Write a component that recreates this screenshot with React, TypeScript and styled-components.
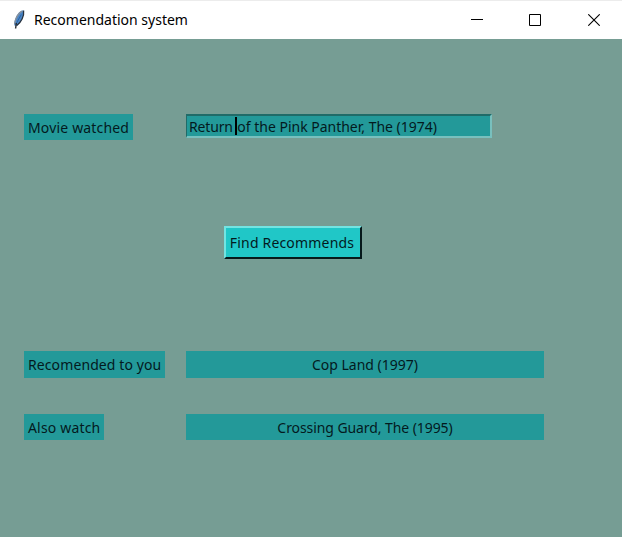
import React from 'react';
import styled, { createGlobalStyle } from 'styled-components';

const GlobalStyle = createGlobalStyle`
  * { box-sizing: border-box; }
  body { margin: 0; overflow: hidden; }
`;

const Window = styled.div`
  width: 622px;
  height: 537px;
  display: flex;
  flex-direction: column;
  background: #769d94;
  color: #031a1e;
  font: 14px/20px 'Noto Sans', 'Open Sans', sans-serif;
  white-space: nowrap;
`;

const TitleBar = styled.header`
  height: 39px;
  flex: none;
  display: flex;
  align-items: center;
  background: #fff;
  border-top: 1px solid #ececec;
  color: #000;
`;

const Feather = styled.svg`
  width: 16px;
  height: 22px;
  margin-left: 11px;
  margin-right: 7px;
`;

const Title = styled.h1`
  flex: 1;
  margin: 0;
  font-size: 14px;
  font-weight: 400;
  line-height: 20px;
`;

const Controls = styled.div`
  display: flex;
  height: 38px;
`;

const ControlButton = styled.button`
  width: 58px;
  height: 38px;
  padding: 0;
  border: 0;
  background: none;
  display: flex;
  align-items: center;
  justify-content: center;

  &:last-child {
    padding-left: 2px;
  }
`;

const Form = styled.main`
  display: grid;
  grid-template-columns: 162px 358px;
  grid-template-rows: 112px 125px 63px 27px;
  padding: 75px 0 0 24px;
  align-items: start;
  justify-items: start;
`;

const Text = styled.span<{ $spacing?: number }>`
  letter-spacing: ${(p) => p.$spacing ?? 0}px;
`;

const Label = styled.label<{ $width: number; $height?: number }>`
  width: ${(p) => p.$width}px;
  height: ${(p) => p.$height ?? 26}px;
  padding: 4px 4px 0;
  background: #239999;
`;

const Entry = styled.div`
  display: flex;
  width: 306px;
  height: 24px;
  padding: 0 1px 0 2px;
  line-height: 21px;
  background: #239999;
  border: 2px solid;
  border-width: 2px 2px 2px 1px;
  border-color: #206b68 #78c0be #78c0be #206b68;
`;

const Caret = styled.i`
  width: 2px;
  height: 18px;
  margin: 1px 0 0 -1px;
  background: #000;
`;

const FindButton = styled.button`
  grid-column: 1 / 3;
  width: 138px;
  height: 33px;
  margin-left: 200px;
  padding: 0 2px 0 0;
  color: inherit;
  font: inherit;
  background: #20c7c7;
  border: 2px solid;
  border-color: #73e4e2 #06191b #06191b #73e4e2;
`;

const Result = styled.output<{ $height?: number }>`
  width: 358px;
  height: ${(p) => p.$height ?? 26}px;
  padding-top: 4px;
  text-align: center;
  background: #239999;
`;

export default function App() {
  return (
    <Window>
      <GlobalStyle />
      <TitleBar>
        <Feather viewBox="0 0 16 22">
          <path d="M12.6 1.3C9.5 1.3 6.5 4.5 4.8 8.5C3.3 12 3 14.5 3.4 16.5L5.8 16.8C9.5 14 13.6 7 12.6 1.3Z" fill="#4a86c8" />
          <path d="M11.5 2C8 3.5 4.2 8.5 3.6 15" fill="none" stroke="#8d9298" strokeWidth="1.3" />
          <path d="M12.6 1.6C13.4 7 10 13.5 5.8 16.5" fill="none" stroke="#27313d" strokeWidth="1.3" />
          <path d="M10.3 5.5L5.5 14" fill="none" stroke="#2b62a0" />
          <path d="M5.3 14L4.6 19.5" fill="none" stroke="#252a30" strokeWidth="1.4" />
        </Feather>
        <Title>Recomendation system</Title>
        <Controls>
          <ControlButton aria-label="Minimize">
            <svg width="12" height="12"><path d="M0 5.5H12" stroke="#000" /></svg>
          </ControlButton>
          <ControlButton aria-label="Maximize">
            <svg width="12" height="12"><path d="M.5 .5H11.5V11.5H.5Z" fill="none" stroke="#000" /></svg>
          </ControlButton>
          <ControlButton aria-label="Close">
            <svg width="12" height="12"><path d="M.3 .3L11.7 11.7M11.7 .3L.3 11.7" stroke="#000" strokeWidth="1.1" /></svg>
          </ControlButton>
        </Controls>
      </TitleBar>
      <Form>
        <Label $width={109}><Text $spacing={0.17}>Movie watched</Text></Label>
        <Entry>
          <Text $spacing={-0.15}>Return&nbsp;</Text>
          <Caret />
          <Text $spacing={-0.01}>of the Pink Panther, The (1974)</Text>
        </Entry>
        <FindButton><Text $spacing={0.18}>Find Recommends</Text></FindButton>
        <Label $width={141} $height={27}><Text $spacing={0.1}>Recomended to you</Text></Label>
        <Result $height={27}><Text>Cop Land (1997)</Text></Result>
        <Label $width={80}><Text $spacing={0.17}>Also watch</Text></Label>
        <Result><Text $spacing={-0.08}>Crossing Guard, The (1995)</Text></Result>
      </Form>
    </Window>
  );
}
